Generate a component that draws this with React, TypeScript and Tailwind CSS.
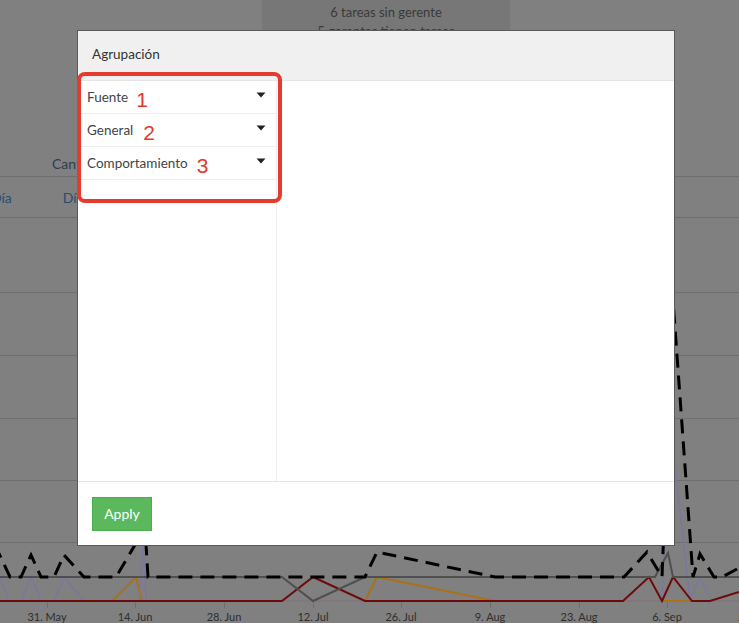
import React from "react";

// background chart series, in page coordinates (chart svg is shifted by -218)
const DASHED = "-5,545 10,577 21,577 31,555 41,577 54,577 64,555 84,577 116,577 145,528 148,577 365,577 377,552 495,577 624,577 647,552 662,577 673,300 693,577 700,554 714,577 722,577 739,568";
const GRAY = "0,577 282,577 313,601 365,577 655,577 668,553 673,577 739,577";
const ORANGE = "0,601 112,601 136,577 142,601 365,601 377,577 495,601 739,601";
const RED = "0,601 282,601 313,577 365,601 623,601 649,577 662,601 673,577 692,601 710,601 739,592";
const LAVENDER = "0,577 9,601 21,601 31,577 41,601 54,601 64,577 84,601 139,601 143,545 146,601 662,601 670,420 690,601 699,577 712,601 739,601";

const GRID = [292, 355, 418, 480, 542];
const TICKS = [
  { x: 47, label: "31. May" },
  { x: 135, label: "14. Jun" },
  { x: 224, label: "28. Jun" },
  { x: 313, label: "12. Jul" },
  { x: 401, label: "26. Jul" },
  { x: 490, label: "9. Aug" },
  { x: 579, label: "23. Aug" },
  { x: 667, label: "6. Sep" },
  { x: 756, label: "20. Sep" },
];

const GROUPS = [
  { label: "Fuente", n: "1", gap: "ml-[8px]" },
  { label: "General", n: "2", gap: "ml-[10px]" },
  { label: "Comportamiento", n: "3", gap: "ml-[9px]" },
];

function Caret() {
  return (
    <svg width="10" height="6" viewBox="0 0 10 6" className="mt-[-4px]">
      <path d="M0.5 0.5 L9.5 0.5 L5 5.5 Z" fill="#222" />
    </svg>
  );
}

function Chart() {
  return (
    <svg width="739" height="405" viewBox="0 0 739 405" className="block">
      <g transform="translate(0,-218)">
        {GRID.map((y) => (
          <line key={y} x1="0" x2="739" y1={y + 0.5} y2={y + 0.5} stroke="#6e6e6e" strokeWidth="1" />
        ))}
        <line x1="0" x2="739" y1="601.5" y2="601.5" stroke="#6a6a8a" strokeWidth="1" />
        {TICKS.map((t) => (
          <g key={t.label}>
            <line x1={t.x + 0.5} x2={t.x + 0.5} y1="601" y2="608" stroke="#6e6e6e" />
            <text x={t.x} y="621" textAnchor="middle" fontSize="11" fill="#2e2e2e" fontFamily="Lato, sans-serif">
              {t.label}
            </text>
          </g>
        ))}
        <polyline points={ORANGE} fill="none" stroke="#a8721a" strokeWidth="2" />
        <polyline points={LAVENDER} fill="none" stroke="#77789f" strokeWidth="1.5" />
        <polyline points={RED} fill="none" stroke="#6d0b0b" strokeWidth="2" />
        <polyline points={GRAY} fill="none" stroke="#4f4f4f" strokeWidth="2" />
        <polyline points={DASHED} fill="none" stroke="#000" strokeWidth="3" strokeDasharray="14 8" />
      </g>
    </svg>
  );
}

export default function App() {
  return (
    <div className="relative h-[623px] w-[739px] overflow-hidden bg-[#808080] font-['Lato',sans-serif]">
      {/* dimmed page behind the modal */}
      <div className="flex h-[177px] flex-col border-b border-[#6e6e6e]">
        <div className="ml-[262px] h-[70px] w-[248px] bg-[#777777] pt-[3px] text-center text-[13px] leading-[19px] text-[#3a3a3a]">
          <div>6 tareas sin gerente</div>
          <div>5 gerentes tienen tareas</div>
        </div>
        <div className="ml-[52px] mt-[83px] text-[14px] text-[#2d3c50]">Cantidad</div>
      </div>
      <div className="flex h-[41px] items-center border-b border-[#6e6e6e] text-[14px] text-[#2f4a6c]">
        <span className="ml-[-9px]">Día</span>
        <span className="ml-[51px]">Día</span>
      </div>
      <Chart />

      {/* modal */}
      <div className="absolute left-[77px] top-[30px] flex h-[516px] w-[598px] flex-col border border-[#5a5a5a] bg-white">
        <div className="flex h-[50px] items-center border-b border-[#e5e5e5] bg-[#f0f0f0] px-[14px] pb-[3px] text-[13.5px] text-[#333]">
          Agrupación
        </div>
        <div className="flex h-[400px]">
          <div className="w-[199px] border-r border-[#eee]">
            {GROUPS.map((g) => (
              <div key={g.label} className="flex h-[33px] items-center justify-between border-b border-[#eee] pl-[9px] pr-[10px]">
                <div className="flex items-center text-[13.5px] text-[#444]">
                  <span>{g.label}</span>
                  <span className={`${g.gap} translate-y-[2px] font-['Liberation_Sans',sans-serif] text-[21px] leading-none text-[#e03a2c]`}>
                    {g.n}
                  </span>
                </div>
                <Caret />
              </div>
            ))}
          </div>
          <div className="flex-1" />
        </div>
        <div className="flex flex-1 items-center border-t border-[#e5e5e5] px-[14px]">
          <button className="h-[34px] w-[60px] border border-[#4cae4c] bg-[#5cb85c] text-[14px] text-white">
            Apply
          </button>
        </div>
      </div>

      {/* red annotation frame */}
      <div className="absolute left-[77px] top-[72px] h-[131px] w-[205px] rounded-[8px] border-[4px] border-[#e53a2e]" />
    </div>
  );
}
